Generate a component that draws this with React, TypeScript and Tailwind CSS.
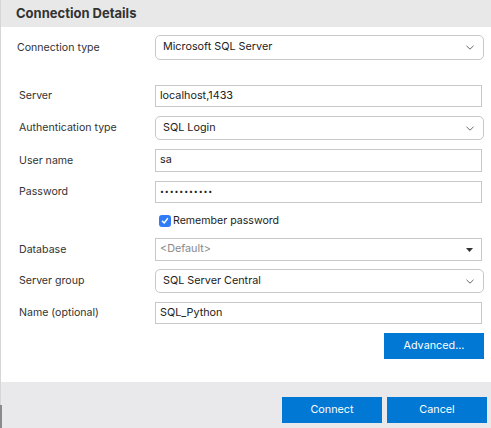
import { ReactNode } from 'react'

const font = { fontFamily: 'Inter, "Liberation Sans", sans-serif' }

function Chevron() {
  return (
    <svg width="8" height="5" viewBox="0 0 8 5" className="shrink-0">
      <polyline points="0.5,0.8 4,4.2 7.5,0.8" fill="none" stroke="#666" strokeWidth="1" />
    </svg>
  )
}

function Row({ label, children, className, pl = 'pl-[18px]' }: { label: string; children: ReactNode; className: string; pl?: string }) {
  return (
    <div className={`flex items-center ${className}`}>
      <div className={`w-[154px] ${pl} text-[10.6px] text-[#333] shrink-0`}>{label}</div>
      {children}
    </div>
  )
}

function Select({ value, h }: { value: string; h: string }) {
  return (
    <div className={`flex items-center justify-between w-[329px] ${h} border border-[#c8c8c8] rounded-[5px] pl-[7px] pr-[9px] text-[10.8px] text-[#222]`}>
      <span>{value}</span>
      <Chevron />
    </div>
  )
}

function Input({ value, h, children }: { value?: string; h: string; children?: ReactNode }) {
  return (
    <div className={`flex items-center w-[327px] ${h} border border-[#c8c8c8] pl-[4px] text-[10.8px] text-[#222]`}>
      {value}
      {children}
    </div>
  )
}

export default function App() {
  return (
    <div className="w-[491px] h-[428px] flex flex-col bg-white border-l border-[#d6d6d6] relative" style={font}>
      {/* Header */}
      <div className="h-[27px] bg-[#e8e8e8] flex items-center pl-[15px] text-[13px] font-bold text-[#333]">
        Connection Details
      </div>

      {/* Body */}
      <div className="flex-1 flex flex-col">
        <Row label="Connection type" pl="pl-[16px]" className="mt-[8px] h-[25px]">
          <Select value="Microsoft SQL Server" h="h-[25px]" />
        </Row>
        <Row label="Server" className="mt-[25px] h-[22px]">
          <Input value="localhost,1433" h="h-[22px]" />
        </Row>
        <Row label="Authentication type" className="mt-[9px] h-[24px]">
          <Select value="SQL Login" h="h-[24px]" />
        </Row>
        <Row label="User name" className="mt-[9px] h-[23px]">
          <Input value="sa" h="h-[23px]" />
        </Row>
        <Row label="Password" className="mt-[9px] h-[22px]">
          <Input h="h-[22px]">
            <span className="text-[7px] tracking-[0.9px] pt-[1px]">•••••••••••</span>
          </Input>
        </Row>
        <div className="mt-[12px] h-[12px] flex items-center pl-[158px]">
          <div className="w-[12px] h-[12px] rounded-[3px] bg-[#2f7cf6] flex items-center justify-center">
            <svg width="8" height="8" viewBox="0 0 8 8">
              <polyline points="1.5,4.2 3.2,6 6.5,1.6" fill="none" stroke="white" strokeWidth="1.5" strokeLinecap="round" strokeLinejoin="round" />
            </svg>
          </div>
          <span className="ml-[2px] text-[10.6px] text-[#222]">Remember password</span>
        </div>
        <Row label="Database" className="mt-[11px] h-[23px]">
          <div className="flex items-center justify-between w-[327px] h-[23px] border border-[#c8c8c8] pl-[4px] pr-[8px] text-[10.8px] text-[#888]">
            <span>&lt;Default&gt;</span>
            <svg width="7" height="4" viewBox="0 0 7 4">
              <polygon points="0,0 7,0 3.5,4" fill="#333" />
            </svg>
          </div>
        </Row>
        <Row label="Server group" className="mt-[8px] h-[24px]">
          <Select value="SQL Server Central" h="h-[24px]" />
        </Row>
        <Row label="Name (optional)" className="mt-[9px] h-[22px]">
          <Input value="SQL_Python" h="h-[22px]" />
        </Row>
        <div className="mt-[9px] flex justify-end pr-[7px]">
          <button className="w-[100px] h-[26px] bg-[#0078d4] text-white text-[10.8px]">Advanced...</button>
        </div>
      </div>

      {/* Footer */}
      <div className="h-[46px] bg-[#e9e9eb] flex items-start justify-end pt-[15px] pr-[4px] gap-[5px]">
        <button className="w-[100px] h-[26px] bg-[#0078d4] text-white text-[10.8px]">Connect</button>
        <button className="w-[100px] h-[26px] bg-[#0078d4] text-white text-[10.8px]">Cancel</button>
      </div>

      <div className="absolute left-[-1px] top-[405px] w-[2px] h-[23px] bg-[#8a8a8a]" />
    </div>
  )
}
